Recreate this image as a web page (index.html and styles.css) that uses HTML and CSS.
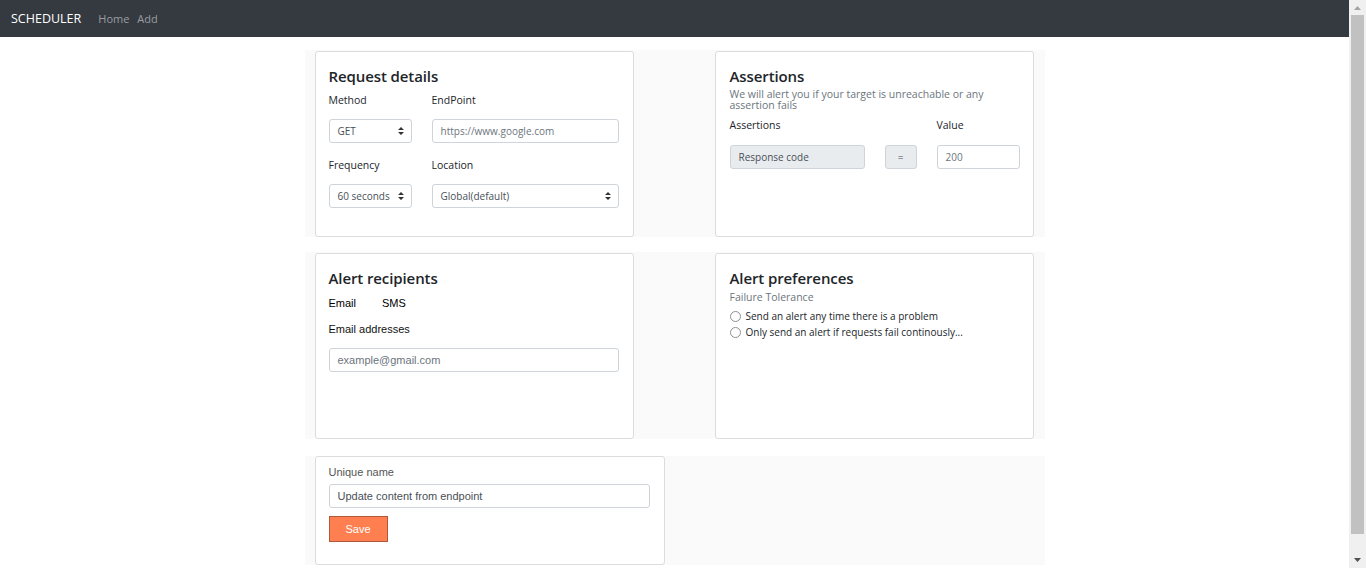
FILE: index.html
```html
<!DOCTYPE html>
<html>
<head>
<meta charset="utf-8">
<link rel="stylesheet" href="styles.css">
</head>
<body>
<div class="page">
<nav class="navbar">
  <span class="brand">SCHEDULER</span>
  <a class="nav-link">Home</a>
  <a class="nav-link">Add</a>
</nav>
<main class="container">
  <section class="row">
    <div class="card card-half">
      <h2 class="card-title">Request details</h2>
      <div class="form-grid">
        <label class="lbl">Method</label>
        <label class="lbl">EndPoint</label>
        <div class="select"><span>GET</span><svg class="caret" width="6" height="8" viewBox="0 0 6 8"><path d="M3 0L6 3H0z M3 8L0 5H6z" fill="#333"/></svg></div>
        <div class="input placeholder">https://www.google.com</div>
        <label class="lbl">Frequency</label>
        <label class="lbl">Location</label>
        <div class="select last"><span>60 seconds</span><svg class="caret" width="6" height="8" viewBox="0 0 6 8"><path d="M3 0L6 3H0z M3 8L0 5H6z" fill="#333"/></svg></div>
        <div class="select last"><span>Global(default)</span><svg class="caret" width="6" height="8" viewBox="0 0 6 8"><path d="M3 0L6 3H0z M3 8L0 5H6z" fill="#333"/></svg></div>
      </div>
    </div>
    <div class="card card-half card-right">
      <h2 class="card-title">Assertions</h2>
      <p class="subtitle">We will alert you if your target is unreachable or any assertion fails</p>
      <div class="assert-grid">
        <label class="lbl">Assertions</label>
        <span></span>
        <label class="lbl">Value</label>
        <div class="input disabled">Response code</div>
        <div class="input disabled eq">=</div>
        <div class="input placeholder">200</div>
      </div>
    </div>
  </section>
  <section class="row">
    <div class="card card-half">
      <h2 class="card-title">Alert recipients</h2>
      <div class="tabs"><span>Email</span><span>SMS</span></div>
      <label class="lbl arial">Email addresses</label>
      <div class="input placeholder arial wide">example@gmail.com</div>
    </div>
    <div class="card card-half card-right">
      <h2 class="card-title">Alert preferences</h2>
      <p class="sub-one">Failure Tolerance</p>
      <div class="radio"><span class="circle"></span>Send an alert any time there is a problem</div>
      <div class="radio"><span class="circle"></span>Only send an alert if requests fail continously...</div>
    </div>
  </section>
  <section class="row row-last">
    <div class="card card-name">
      <label class="lbl arial muted">Unique name</label>
      <div class="input arial value">Update content from endpoint</div>
      <button class="btn-save">Save</button>
    </div>
  </section>
</main>
</div>
<div class="scrollbar" aria-hidden="true">
  <svg class="sb-arrow" width="17" height="17" viewBox="0 0 17 17"><path d="M8.5 6L12 10H5z" fill="#a3a3a3"/></svg>
  <div class="sb-track"><div class="sb-thumb"></div></div>
  <svg class="sb-arrow" width="17" height="17" viewBox="0 0 17 17"><path d="M8.5 11L5 7H12z" fill="#505050"/></svg>
</div>
</body>
</html>
```
FILE: styles.css
```css
html, body {
  margin: 0;
  padding: 0;
}
body {
  font-family: "Open Sans", "Noto Sans", sans-serif;
  color: #212529;
  background: #fff;
  display: flex;
  height: 568px;
  overflow: hidden;
}
.page {
  flex: 1;
  min-width: 0;
}
.scrollbar {
  width: 17px;
  height: 568px;
  background: #f0f0f0;
  display: flex;
  flex-direction: column;
}
.sb-arrow {
  display: block;
  flex: none;
}
.sb-track {
  flex: 1;
  padding: 0 2px;
  display: flex;
}
.sb-thumb {
  flex: 1;
  background: #c1c1c1;
  margin-bottom: 17px;
  margin-top: -2px;
}
.navbar {
  height: 37px;
  background: #343a40;
  display: flex;
  align-items: center;
  padding: 0 11px;
}
.brand {
  color: #fff;
  font-size: 12.5px;
  margin-right: 17px;
}
.nav-link {
  color: #9a9da0;
  font-size: 11px;
  margin-right: 8px;
}
.container {
  width: 740px;
  margin: 13px auto 15px;
}
.row {
  background: #fafafa;
  display: flex;
  justify-content: space-between;
  padding: 1px 11px 0 10px;
  margin-bottom: 15px;
}
.row-last {
  justify-content: flex-start;
  padding-top: 0;
  margin-top: 17px;
  margin-bottom: 0;
}
.card {
  background: #fff;
  border: 1px solid #dcdcdc;
  border-radius: 3px;
  box-sizing: border-box;
  padding: 14px 14px 14px 13px;
}
.card-right {
  padding-left: 14px;
}
.card-half {
  width: 319px;
  height: 186px;
}
.card-name {
  width: 350px;
  height: 109px;
  padding-top: 7px;
}
.card-title {
  margin: 0;
  font-size: 15px;
  font-weight: 600;
  line-height: 20px;
  color: #212529;
  letter-spacing: -0.1px;
}
.lbl {
  display: block;
  font-size: 10.5px;
  line-height: 16px;
}
.form-grid {
  display: grid;
  grid-template-columns: 83px 187px;
  column-gap: 20px;
  margin-top: 6px;
}
.form-grid .select,
.form-grid .input {
  margin-top: 11px;
  margin-bottom: 14px;
}
.form-grid .last { margin-bottom: 0; }
.select, .input {
  box-sizing: border-box;
  height: 24px;
  border: 1px solid #ced4da;
  border-radius: 3px;
  font-size: 10px;
  padding: 0 8px;
  display: flex;
  align-items: center;
  color: #495057;
  background: #fff;
}
.select {
  justify-content: space-between;
  padding-right: 7px;
}
.placeholder {
  color: #6c757d;
}
.subtitle {
  margin: 3px 0 0;
  font-size: 10.5px;
  line-height: 11px;
  color: #6c757d;
  font-weight: 400;
}
.assert-grid {
  display: grid;
  grid-template-columns: 135px 32px 83px;
  column-gap: 20px;
  margin-top: 6px;
}
.assert-grid .input {
  margin-top: 12px;
  height: 24px;
}
.disabled {
  background: #e9ecef;
}
.eq {
  justify-content: center;
  padding: 0;
}
.arial {
  font-family: "Liberation Sans", Arial, sans-serif;
}
.tabs {
  display: flex;
  gap: 26px;
  font-family: "Liberation Sans", Arial, sans-serif;
  font-size: 11px;
  line-height: 16px;
  margin-top: 7px;
  color: #000;
}
.card-half > .lbl.arial {
  margin-top: 10px;
  font-size: 11px;
  color: #111;
}
.wide {
  margin-top: 11px;
  font-size: 11px;
}
.sub-one {
  margin: 1px 0 0;
  font-size: 10.5px;
  line-height: 16px;
  color: #6c757d;
}
.radio {
  display: flex;
  align-items: center;
  font-size: 10px;
  line-height: 16px;
  gap: 5px;
}
.circle {
  width: 9px;
  height: 9px;
  border: 1px solid #8f8f8f;
  border-radius: 50%;
  display: inline-block;
  flex: none;
}
.sub-one + .radio { margin-top: 3px; }
.muted {
  color: #555;
  font-size: 11px;
}
.value {
  margin-top: 4px;
  font-size: 11px;
  color: #495057;
  width: 321px;
}
.btn-save {
  margin-top: 8px;
  width: 59px;
  height: 26px;
  background: #ff7f50;
  border: 1px solid #b0583a;
  color: #fff;
  font-family: "Liberation Sans", Arial, sans-serif;
  font-size: 11px;
  padding: 0;
}
```
